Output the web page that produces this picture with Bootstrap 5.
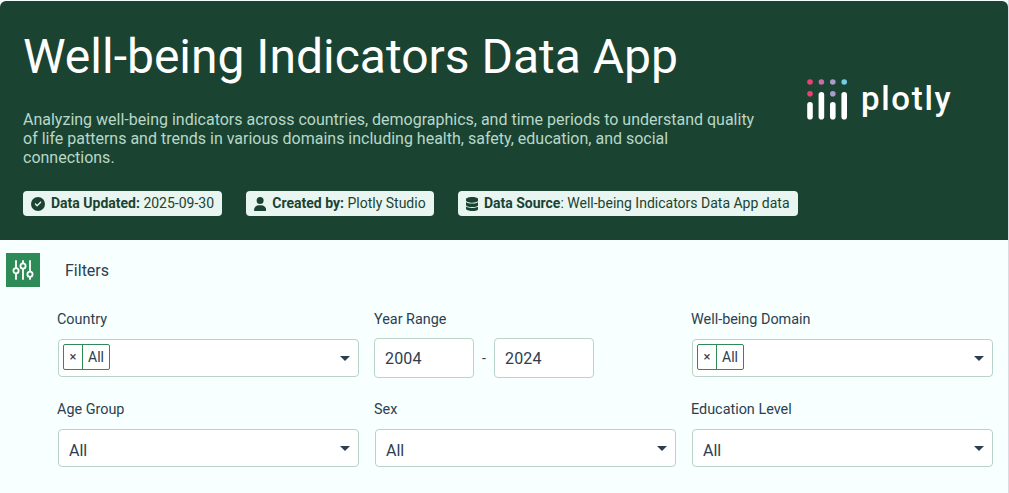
<!DOCTYPE html>
<html lang="en">
<head>
<meta charset="utf-8">
<title>Well-being Indicators Data App</title>
<link href="https://cdn.jsdelivr.net/npm/bootstrap@5.3.0/dist/css/bootstrap.min.css" rel="stylesheet">
<style>
html, body { height: 493px; overflow: hidden; }
body { margin: 0; background: #fff; font-family: Roboto, sans-serif; color: #2c3e50; }
.app-shell { width: 1009px; padding-top: 1px; border-right: 1px solid #d9dde3; height: 493px; background: #f7ffff; }
.hero { height: 239px; background: #1b4332; border-radius: 6px 6px 0 0; padding: 27px 0 0 23px; color: #fff; }
.hero-main { width: 740px; }
.hero-title { font-size: 48px; line-height: 57.6px; font-weight: 400; margin: 0 0 24px; white-space: nowrap; }
.hero-desc { font-size: 16px; line-height: 19.2px; color: #b7d8c8; margin: 0 0 24px; }
.chips { gap: 24px; }
.chip { height: 25px; background: #e9f5f1; border-radius: 4px; padding: 0 8px; font-size: 14px; line-height: 25px; color: #1b4332; gap: 6px; white-space: nowrap; }
.chip strong { font-weight: 700; }
.chip svg { width: 14px; height: 14px; fill: #1b4332; flex: none; }
.chip svg.icon-narrow { width: 12.25px; }
.logo { width: 146px; margin: 51px 0 0 44px; }
.filters-head { height: 71px; padding: 13px 0 0 6px; gap: 25px; }
.filters-icon { width: 34px; height: 34px; background: #2e8b57; }
.filters-icon svg { width: 24px; height: 24px; }
.filters-title { font-size: 16px; color: #2c3e50; height: 34px; padding-top: 2px; }
.filter-grid { display: grid; grid-template-columns: repeat(3, 301px); column-gap: 16px; padding-left: 58px; }
.flabel { font-size: 14.4px; line-height: 17px; color: #2c3e50; margin: 0 0 11px -1px; display: block; }
.fcell-top { height: 90px; }
.fbox { height: 38px; background: #fff; border: 1px solid #b7d4c7; border-radius: 4px; position: relative; }
.fbox-multi { margin-top: 1px; }
.fbox-single { margin-top: 1px; padding-left: 10px; font-size: 16px; line-height: 41px; color: #2c3e50; }
.caret { position: absolute; right: 8px; top: 16px; width: 0; height: 0; border-left: 5.5px solid transparent; border-right: 5.5px solid transparent; border-top: 5.5px solid #2c3e50; }
.tag { position: absolute; left: 4px; top: 4px; height: 26px; border: 1px solid #2e8b57; border-radius: 2px; display: flex; font-size: 14px; line-height: 24px; }
.tag-x { width: 19px; text-align: center; border-right: 1px solid #2e8b57; font-size: 13px; }
.tag-v { padding: 0 5px; }
.yr { width: 100px; height: 40px; background: #fff; border: 1px solid #b7d4c7; border-radius: 4px; padding-left: 10px; font-size: 16px; line-height: 39px; color: #2c3e50; letter-spacing: .15px; }
.yr-shell { margin-left: -1px; margin-top: -1px; }
.yr-dash { width: 20px; text-align: center; font-size: 14px; line-height: 40px; color: #2c3e50; }
</style>
</head>
<body>
<div class="app-shell">
  <header class="hero d-flex">
    <div class="hero-main">
      <h1 class="hero-title">Well-being Indicators Data App</h1>
      <p class="hero-desc">Analyzing well-being indicators across countries, demographics, and time periods to understand quality of life patterns and trends in various domains including health, safety, education, and social connections.</p>
      <div class="chips d-flex">
        <span class="chip d-flex align-items-center"><svg viewBox="0 0 512 512"><path d="M256 0a256 256 0 1 0 0 512 256 256 0 1 0 0-512zm113 209L241 337c-9 9-25 9-34 0l-64-64c-9-9-9-25 0-34s25-9 34 0l47 47 111-111c9-9 25-9 34 0s9 25 0 34z"/></svg><span><strong>Data Updated:</strong> 2025-09-30</span></span>
        <span class="chip d-flex align-items-center"><svg class="icon-narrow" viewBox="0 0 448 512"><path d="M224 256a128 128 0 1 0 0-256 128 128 0 1 0 0 256zm-45 48C79 304 0 383 0 482c0 17 13 30 30 30h388c17 0 30-13 30-30 0-99-79-178-178-178h-91z"/></svg><span><strong>Created by:</strong> Plotly Studio</span></span>
        <span class="chip d-flex align-items-center"><svg class="icon-narrow" viewBox="0 0 448 512"><path d="M448 80v48c0 44-100 80-224 80S0 172 0 128V80C0 36 100 0 224 0s224 36 224 80zm-55 135c21-8 40-17 55-28v101c0 44-100 80-224 80S0 332 0 288V187c15 11 34 20 55 28 45 16 104 25 169 25s124-9 169-25zM0 347c15 11 34 20 55 28 45 16 104 25 169 25s124-9 169-25c21-8 40-17 55-28v85c0 44-100 80-224 80S0 476 0 432v-85z"/></svg><span><strong>Data Source</strong>: Well-being Indicators Data App data</span></span>
      </div>
    </div>
    <div class="logo">
      <svg width="146" height="44" viewBox="0 0 146 44" role="img" aria-label="plotly logo">
        <circle cx="3" cy="3" r="2.8" fill="#ef3f72"/><circle cx="14.4" cy="3" r="2.8" fill="#c76ea5"/><circle cx="25.8" cy="3" r="2.8" fill="#a99ccc"/><circle cx="37.2" cy="3" r="2.8" fill="#72cdeb"/>
        <circle cx="3" cy="14.8" r="2.8" fill="#ef3f72"/><circle cx="25.8" cy="14.8" r="2.8" fill="#a99ccc"/>
        <g fill="#fff"><rect x="0.2" y="23" width="5.6" height="17.5" rx="2.8"/><rect x="11.6" y="13" width="5.6" height="27.5" rx="2.8"/><rect x="23" y="23" width="5.6" height="17.5" rx="2.8"/><rect x="34.4" y="13" width="5.6" height="27.5" rx="2.8"/></g>
        <text x="54" y="31" fill="#fff" font-family="Roboto, sans-serif" font-size="33" font-weight="500" letter-spacing="1.7">plotly</text>
      </svg>
    </div>
  </header>
  <div class="filters-head d-flex">
    <div class="filters-icon d-flex align-items-center justify-content-center">
      <svg viewBox="0 0 24 24" fill="none" stroke="#fff" stroke-width="1.8" stroke-linecap="round"><path d="M5 3v7M5 16v5M12 3v2M12 11v10M19 3v10M19 19v2"/><circle cx="5" cy="12.8" r="2.6"/><circle cx="12" cy="8" r="2.6"/><circle cx="19" cy="16.2" r="2.6"/></svg>
    </div>
    <div class="filters-title d-flex align-items-center">Filters</div>
  </div>
  <div class="filter-grid">
    <div class="fcell-top"><label class="flabel">Country</label><div class="fbox fbox-multi"><div class="tag"><span class="tag-x">×</span><span class="tag-v">All</span></div><span class="caret"></span></div></div>
    <div class="fcell-top"><label class="flabel">Year Range</label><div class="yr-shell d-flex"><div class="yr">2004</div><div class="yr-dash">-</div><div class="yr">2024</div></div></div>
    <div class="fcell-top"><label class="flabel">Well-being Domain</label><div class="fbox fbox-multi"><div class="tag"><span class="tag-x">×</span><span class="tag-v">All</span></div><span class="caret"></span></div></div>
    <div><label class="flabel">Age Group</label><div class="fbox fbox-single">All<span class="caret"></span></div></div>
    <div><label class="flabel">Sex</label><div class="fbox fbox-single">All<span class="caret"></span></div></div>
    <div><label class="flabel">Education Level</label><div class="fbox fbox-single">All<span class="caret"></span></div></div>
  </div>
</div>
<script src="https://cdn.jsdelivr.net/npm/bootstrap@5.3.0/dist/js/bootstrap.bundle.min.js"></script>
</body>
</html>
